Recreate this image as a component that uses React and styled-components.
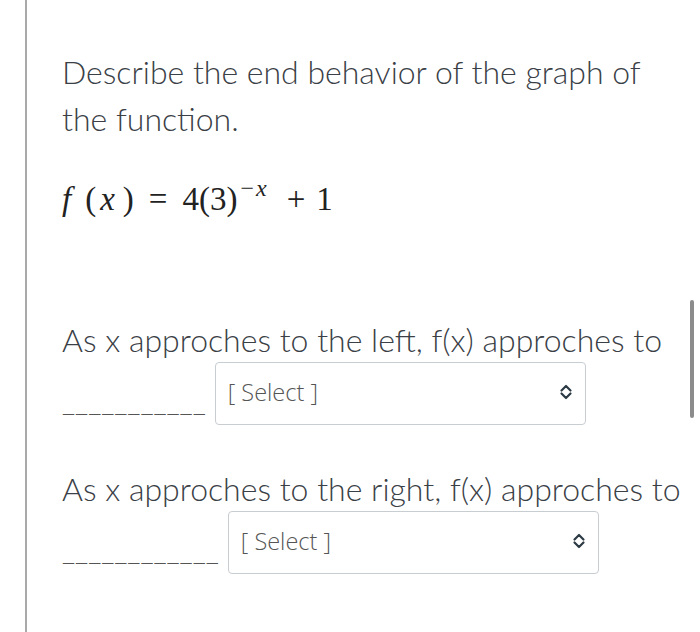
import styled, { createGlobalStyle } from "styled-components";

const GlobalStyle = createGlobalStyle`
  html, body {
    margin: 0;
    padding: 0;
    background: #ffffff;
    overflow: hidden;
  }
`;

const Page = styled.div`
  width: 700px;
  height: 632px;
  position: relative;
  background: #fff;
  overflow: hidden;
`;

const Panel = styled.div`
  margin-left: 25px;
  height: 632px;
  border-left: 2px solid #a9a9a9;
  padding: 48px 0 0 35px;
  box-sizing: border-box;
  font-family: Lato, "Liberation Sans", sans-serif;
  font-weight: 300;
  color: #3a4046;
`;

const Question = styled.p`
  margin: 0;
  font-size: 32px;
  line-height: 47px;
  width: 600px;
`;

const Formula = styled.div`
  margin-top: 38px;
  height: 38px;
  line-height: 38px;
  font-family: "Liberation Serif", "Times New Roman", serif;
  font-weight: 400;
  font-size: 33px;
  color: #222;
  white-space: pre;
`;

const Var = styled.i`
  font-style: italic;
  margin: 0 ${(p) => p.right || 0}px 0 ${(p) => p.left || 0}px;
`;

const Exponent = styled.sup`
  font-size: 24px;
  vertical-align: 14px;
  line-height: 0;
  margin-left: 3px;
  letter-spacing: 2px;
`;

const Op = styled.span`
  margin: 0 ${(p) => p.right}px 0 ${(p) => p.left}px;
`;

const Prompt = styled.div`
  margin-top: ${(p) => p.gap}px;
  font-size: 32px;
  line-height: 40px;
  white-space: nowrap;
`;

const AnswerRow = styled.div`
  display: flex;
  align-items: flex-end;
  gap: ${(p) => p.gap}px;
  margin-top: 2px;
`;

const Blank = styled.span`
  font-size: 29px;
  line-height: 29px;
  color: #555;
  padding-bottom: 11px;
`;

const SelectBox = styled.div`
  width: 371px;
  height: 63px;
  box-sizing: border-box;
  border: 1px solid #c8cdd1;
  border-radius: 4px;
  display: flex;
  align-items: center;
  justify-content: space-between;
  padding: 0 12px;
  background: #fff;
`;

const SelectText = styled.span`
  font-family: "Open Sans", Lato, sans-serif;
  font-weight: 300;
  font-size: 23.5px;
  color: #555;
  margin-top: -4px;
`;

const Scrollbar = styled.div`
  position: absolute;
  left: 690px;
  top: 300px;
  width: 4px;
  height: 118px;
  border-radius: 2px;
  background: #8c8c8c;
`;

function Chevrons() {
  return (
    <svg width="14" height="18" viewBox="0 0 14 18" style={{ marginTop: -4 }}>
      <path
        d="M2.5 7.5 L7 3 L11.5 7.5 M2.5 10.5 L7 15 L11.5 10.5"
        fill="none"
        stroke="#2d3b45"
        strokeWidth="2.2"
        strokeLinecap="round"
        strokeLinejoin="round"
      />
    </svg>
  );
}

function Dropdown() {
  return (
    <SelectBox>
      <SelectText>[ Select ]</SelectText>
      <Chevrons />
    </SelectBox>
  );
}

export default function App() {
  return (
    <Page>
      <GlobalStyle />
      <Panel>
        <Question>
          Describe the end behavior of the graph of the function.
        </Question>
        <Formula>
          <Var>f</Var>
          <Op left={14} right={0}>(</Op>
          <Var left={4} right={8}>x</Var>)<Op left={15} right={15}>=</Op>4(3)
          <Exponent>
            −<Var>x</Var>
          </Exponent>
          <Op left={18} right={11}>+</Op>1
        </Formula>
        <Prompt gap={102}>As x approches to the left, f(x) approches to</Prompt>
        <AnswerRow gap={9}>
          <Blank>___________</Blank>
          <Dropdown />
        </AnswerRow>
        <Prompt gap={44}>As x approches to the right, f(x) approches to</Prompt>
        <AnswerRow gap={9}>
          <Blank>____________</Blank>
          <Dropdown />
        </AnswerRow>
      </Panel>
      <Scrollbar />
    </Page>
  );
}
